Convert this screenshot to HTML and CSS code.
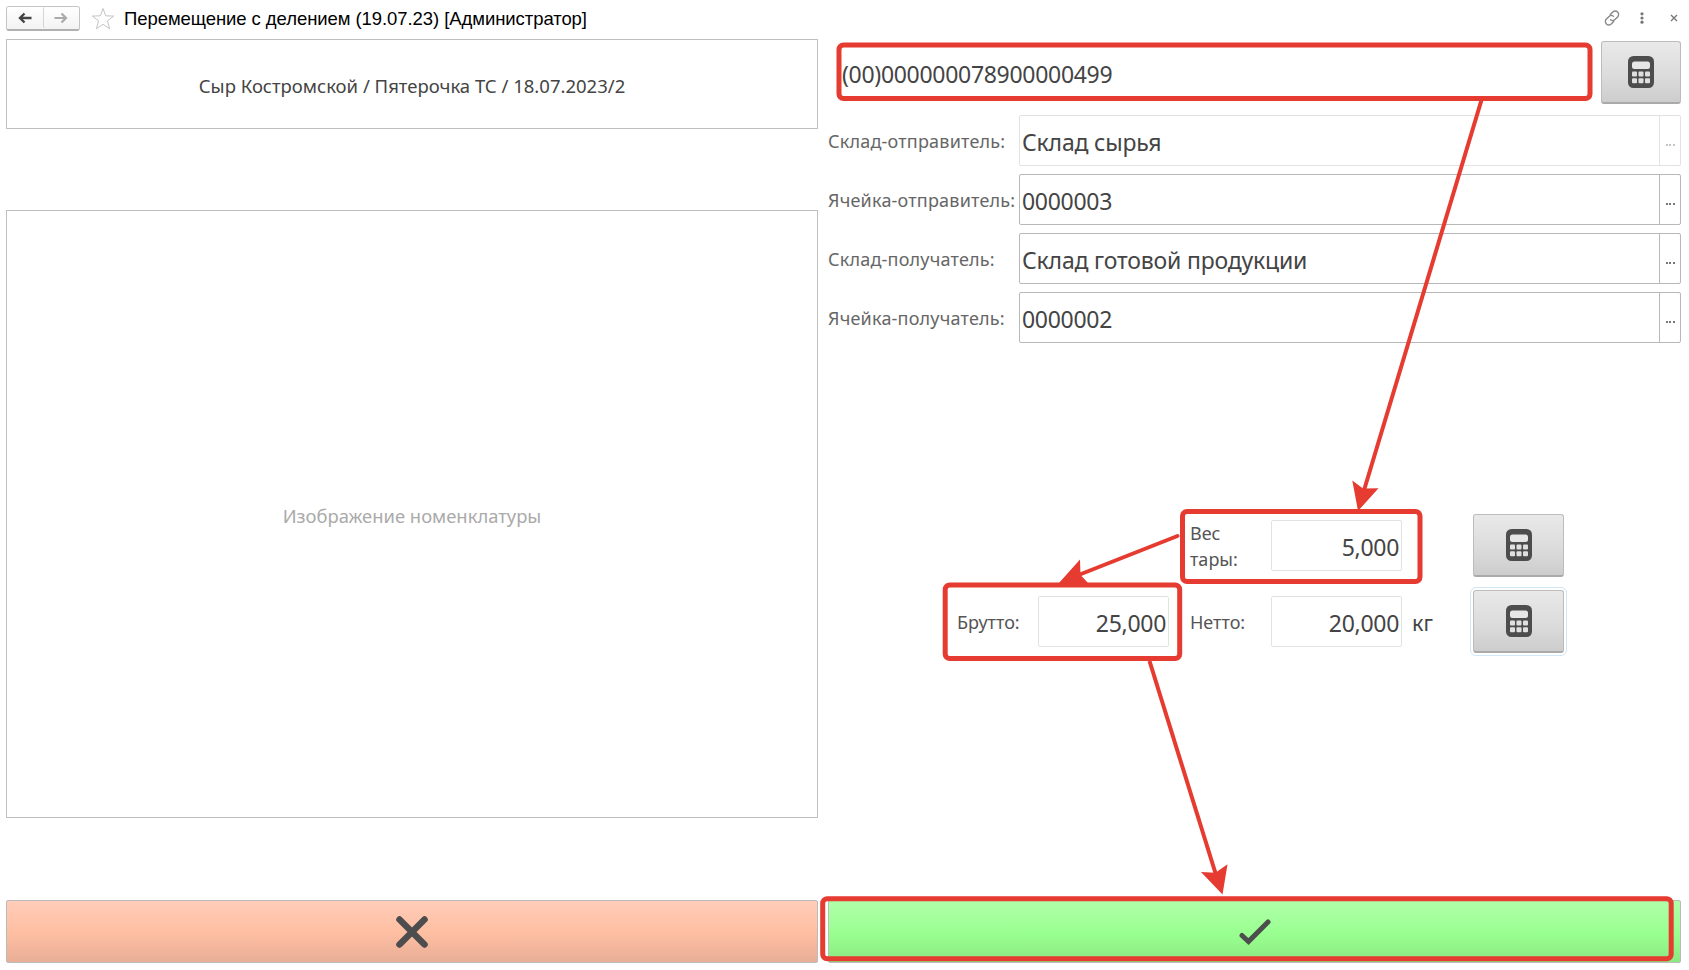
FILE: index.html
```html
<!DOCTYPE html>
<html lang="ru">
<head>
<meta charset="utf-8">
<title>Перемещение с делением</title>
<link rel="stylesheet" href="styles.css">
</head>
<body>
<svg class="defs" width="0" height="0" aria-hidden="true">
  <symbol id="calc" viewBox="0 0 26 32">
    <rect width="26" height="32" rx="5.5" fill="#4d4d4d"/>
    <rect x="4" y="5.5" width="18" height="7.5" rx="2.5" fill="#e6e6e6"/>
    <g fill="#e0e0e0">
      <rect x="4" y="15.5" width="5" height="5" rx="1"/><rect x="10.5" y="15.5" width="5" height="5" rx="1"/><rect x="17" y="15.5" width="5" height="5" rx="1"/>
      <rect x="4" y="22.3" width="5" height="5" rx="1"/><rect x="10.5" y="22.3" width="5" height="5" rx="1"/><rect x="17" y="22.3" width="5" height="5" rx="1"/>
    </g>
  </symbol>
</svg>
<div class="app">
  <header class="titlebar">
    <div class="nav">
      <button class="nav-btn"><svg width="14" height="12" viewBox="0 0 14 12"><path d="M13.500 6H2M6.500 1.500L2 6l4.500 4.500" fill="none" stroke="#444" stroke-width="2.400"/></svg></button>
      <button class="nav-btn"><svg width="14" height="12" viewBox="0 0 14 12"><path d="M.5 6H12M7.500 1.500L12 6l-4.500 4.500" fill="none" stroke="#aaa" stroke-width="2.200"/></svg></button>
    </div>
    <svg class="star" width="24" height="24" viewBox="0 0 24 24"><path d="M12 1.500l2.700 7.300 8 .3-6.300 4.800 2.300 7.900L12 17.300l-6.700 4.500 2.300-7.900L1.300 9.100l8-.3z" fill="#fff" stroke="#c4c4c4" stroke-width="1"/></svg>
    <h1 class="title">Перемещение с делением (19.07.23) [Администратор]</h1>
    <div class="tools">
      <svg width="16" height="16" viewBox="0 0 16 16"><g fill="none" stroke="#888" stroke-width="1.400" stroke-linecap="round"><path d="M6.300 4.600L8.800 2.100a3.300 3.300 0 0 1 4.800 4.800l-2.700 2.700a3.300 3.300 0 0 1-4.300.2"/><path d="M9.700 11.400L7.200 13.900a3.300 3.300 0 0 1-4.800-4.800l2.700-2.700a3.300 3.300 0 0 1 4.300-.2"/></g></svg>
      <svg width="4" height="12" viewBox="0 0 4 12"><g fill="#777"><circle cx="2" cy="1.800" r="1.600"/><circle cx="2" cy="6" r="1.600"/><circle cx="2" cy="10.200" r="1.600"/></g></svg>
      <svg width="8" height="8" viewBox="0 0 8 8"><path d="M1 1l6 6M7 1L1 7" stroke="#777" stroke-width="1.400"/></svg>
    </div>
  </header>

  <main class="columns">
    <section class="left">
      <div class="product"><span class="product-text">Сыр Костромской / Пятерочка ТС / 18.07.2023/2</span></div>
      <div class="picture"><span class="picture-text">Изображение номенклатуры</span></div>
      <button class="action cancel"><svg width="32" height="32" viewBox="0 0 32 32"><path d="M3.500 3.500l25 25M28.500 3.500l-25 25" stroke="#4d4d4d" stroke-width="6.500" stroke-linecap="round"/></svg></button>
    </section>

    <section class="right">
      <div class="scan">
        <div class="code"><span class="digits">(00)000000078900000499</span></div>
        <button class="calc"><svg width="26" height="32"><use href="#calc"/></svg></button>
      </div>
      <div class="fields">
        <span class="label">Склад-отправитель:</span><div class="field disabled"><span class="words">Склад сырья</span><i class="more"><b></b><b></b><b></b></i></div>
        <span class="label">Ячейка-отправитель:</span><div class="field"><span class="digits">0000003</span><i class="more"><b></b><b></b><b></b></i></div>
        <span class="label">Склад-получатель:</span><div class="field"><span class="words">Склад готовой продукции</span><i class="more"><b></b><b></b><b></b></i></div>
        <span class="label">Ячейка-получатель:</span><div class="field"><span class="digits">0000002</span><i class="more"><b></b><b></b><b></b></i></div>
      </div>
      <div class="weights">
        <span class="wlabel tare">Вес<br>тары:</span>
        <div class="num"><span class="digits">5,000</span></div>
        <button class="calc wide"><svg width="26" height="32"><use href="#calc"/></svg></button>
        <span class="wlabel">Брутто:</span>
        <div class="num"><span class="digits">25,000</span></div>
        <span class="wlabel net">Нетто:</span>
        <div class="num"><span class="digits">20,000</span></div>
        <span class="unit">кг</span>
        <button class="calc wide focused"><svg width="26" height="32"><use href="#calc"/></svg></button>
      </div>
      <button class="action confirm"><svg width="32" height="26" viewBox="0 0 32 26"><path d="M3 16.500l6.500 6L29 3" fill="none" stroke="#4d4d4d" stroke-width="5" stroke-linecap="round" stroke-linejoin="miter"/></svg></button>
    </section>
  </main>

  <svg class="marks" width="1689" height="970" viewBox="0 0 1689 970">
    <g fill="none" stroke="#e53b30" stroke-width="5">
      <rect x="839" y="45" width="751" height="53.500" rx="4.500"/>
      <rect x="1182.500" y="511.500" width="237.500" height="70" rx="4.500"/>
      <rect x="945.200" y="585" width="234.500" height="73.500" rx="4.500"/>
      <rect x="822.700" y="898.700" width="848.500" height="60" rx="4.500"/>
    </g>
    <g fill="none" stroke="#e53b30" stroke-width="4">
      <path d="M1481.500 100L1363.500 492"/>
      <path d="M1177.500 536L1076 576" stroke-linecap="round"/>
      <path d="M1149.500 661L1217 878"/>
    </g>
    <g fill="#e53b30">
      <path d="M1358 511L1352.300 480.500l10.700 8 15.500-.3z"/>
      <path d="M1058.500 583.500L1080 559.500l.5 15.500 8 8.500z"/>
      <path d="M1222.500 894.500L1201 872l14.500.8 12-8.500z"/>
    </g>
  </svg>
</div>
</body>
</html>
```
FILE: styles.css
```css
* { box-sizing: border-box; }
body { margin: 0; background: #fff; color: #444; font-family: "Noto Sans", "Open Sans", sans-serif; }
button { margin: 0; padding: 0; border: 0; font: inherit; display: flex; align-items: center; justify-content: center; }
svg { display: block; }
.defs { position: absolute; }
.app { position: relative; width: 1689px; height: 970px; overflow: hidden; padding: 0 8px 0 6px; }

.titlebar { height: 39px; display: flex; align-items: center; padding-bottom: 2px; }
.nav { display: flex; width: 74px; height: 25px; border: 1px solid #c4c4c4; border-bottom: 2px solid #b0b0b0; border-radius: 3px; }
.nav-btn { flex: 1; background: linear-gradient(#fff, #f3f3f3); border-radius: 2px; }
.nav-btn + .nav-btn { border-left: 1px solid #d5d5d5; }
.star { margin-left: 11px; }
.title { margin: 0 0 0 9px; color: #000; font: 400 18.5px/24px "Liberation Sans", Arial, sans-serif; white-space: nowrap; letter-spacing: -0.07px; }
.tools { margin-left: auto; margin-right: 3px; padding-bottom: 2px; display: flex; align-items: center; }
.tools svg:nth-child(2) { margin: 0 26px 0 20px; }

.columns { display: grid; grid-template-columns: 812px 853px; column-gap: 10px; }
.left, .right { display: flex; flex-direction: column; height: 924px; }
.product, .picture { display: flex; align-items: center; justify-content: center; border: 1px solid #bfbfbf; white-space: nowrap; }
.product { height: 90px; padding-top: 2px; font-size: 18.5px; }
.picture { height: 608px; margin-top: 81px; padding-top: 2px; font-size: 18.4px; color: #aaa; }
.action { height: 63px; margin-top: auto; border: 1px solid #bbb; border-radius: 2px; }
.cancel { background: linear-gradient(#ffcdb9, #ffbfa3 50%, #e8ae96); }
.confirm { background: linear-gradient(#b0ffa9, #98ff8f 55%, #8be882); }

.scan { display: flex; justify-content: space-between; padding: 2px 0 0 14px; height: 65px; }
.code { padding-top: 17px; line-height: 32px; }
.digits { font-size: 23px; letter-spacing: -0.3px; }
.words { font-size: 23px; letter-spacing: -0.18px; }
.calc { width: 80px; height: 63px; background: linear-gradient(#e9e9e9, #dcdcdc 55%, #cdcdcd); border: 1px solid #bcbcbc; border-bottom: 2px solid #aaa; border-radius: 3px; }

.fields { margin-top: 11px; display: grid; grid-template-columns: 191px 662px; grid-auto-rows: 51px; row-gap: 8px; align-items: center; }
.label { padding-top: 1px; font-size: 18px; letter-spacing: 0.2px; color: #666; white-space: nowrap; }
.field { height: 51px; display: flex; align-items: center; justify-content: space-between; padding-left: 2px; border: 1px solid #b8b8b8; border-radius: 2px; white-space: nowrap; }
.field > span { padding-top: 2px; }
.more { align-self: stretch; width: 21px; border-left: 1px solid #b8b8b8; display: flex; align-items: center; justify-content: center; gap: 1.5px; padding-top: 8px; }
.more b { width: 2px; height: 2px; background: #777; }
.disabled, .disabled .more { border-color: #e2e2e2; }
.disabled .more b { background: #c4c4c4; }

.weights { margin: 171px 0 0 129px; display: grid; grid-template-columns: 81px 131px 21px 81px 131px 71px 91px; grid-template-rows: 63px 63px; row-gap: 13px; align-items: center; }
.wlabel { padding-top: 1px; font-size: 18px; line-height: 26px; color: #555; white-space: nowrap; }
.tare { grid-column: 4; }
.net { grid-column: 4; }
.num { height: 51px; border: 1px solid #e2e2e2; border-radius: 2px; display: flex; align-items: center; justify-content: flex-end; padding: 2px 2px 0 0; }
.unit { padding: 1px 0 0 10px; font-size: 21.5px; }
.wide { width: 91px; grid-column: 7; }
.focused { outline: 1px solid #cfe6f7; outline-offset: 2px; }
.marks { position: absolute; left: 0; top: 0; pointer-events: none; }
```
